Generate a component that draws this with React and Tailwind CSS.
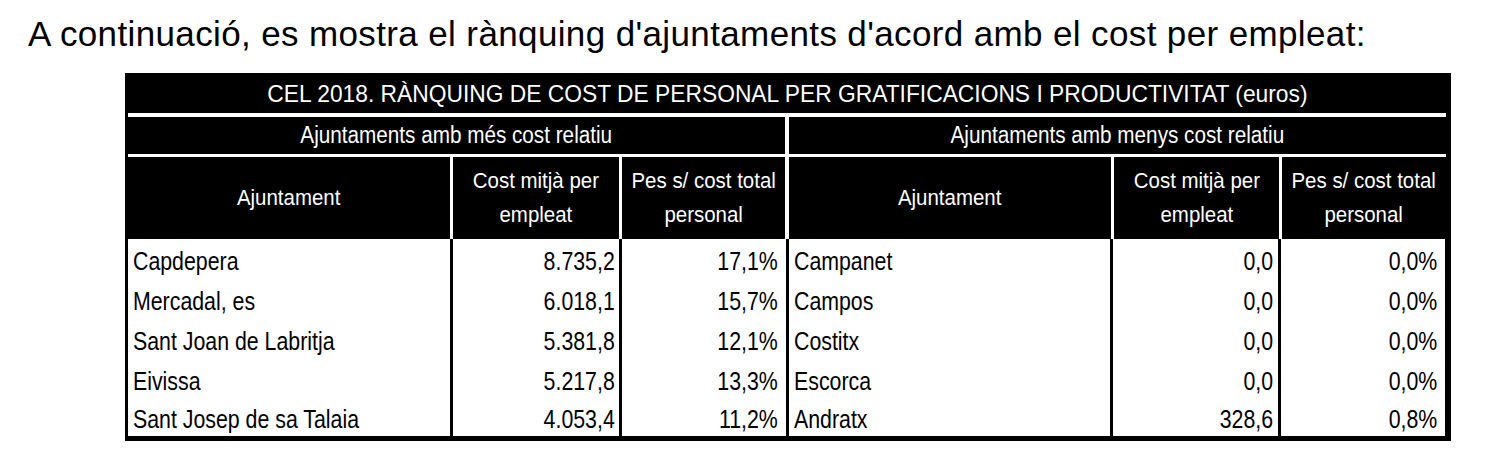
import React from "react";

const arial = "font-['Liberation_Sans',Arial,sans-serif]";

const left = [
  ["Capdepera", "8.735,2", "17,1%"],
  ["Mercadal, es", "6.018,1", "15,7%"],
  ["Sant Joan de Labritja", "5.381,8", "12,1%"],
  ["Eivissa", "5.217,8", "13,3%"],
  ["Sant Josep de sa Talaia", "4.053,4", "11,2%"],
];

const right = [
  ["Campanet", "0,0", "0,0%"],
  ["Campos", "0,0", "0,0%"],
  ["Costitx", "0,0", "0,0%"],
  ["Escorca", "0,0", "0,0%"],
  ["Andratx", "328,6", "0,8%"],
];

// the sheet uses a condensed face; squeeze Liberation Sans to match
const Narrow = ({ children, className = "" }) => (
  <span className={`inline-block whitespace-nowrap ${className}`}>{children}</span>
);

const HeadCell = ({ children }) => (
  <div className="bg-black flex items-center justify-center text-center leading-[34px]">
    <Narrow className="scale-x-[0.93] origin-center">{children}</Narrow>
  </div>
);

const Rule = () => <div className="bg-white" />;

const TextCell = ({ children, extra = "" }) => (
  <div className={`bg-white flex items-center pt-[3px] pl-[5px] ${extra}`}>
    <Narrow className="scale-x-[0.82] origin-left">{children}</Narrow>
  </div>
);

const NumCell = ({ children, extra = "" }) => (
  <div className={`bg-white flex items-center justify-end pt-[3px] ${extra}`}>
    <Narrow className="scale-x-[0.82] origin-right">{children}</Narrow>
  </div>
);

export default function App() {
  return (
    <div className={`bg-white w-[1501px] h-[461px] text-black ${arial}`}>
      <h1 className="pl-[28px] pt-[14px] h-[73px] text-[35px] leading-[40px] tracking-[0.37px] whitespace-nowrap">
        A continuació, es mostra el rànquing d'ajuntaments d'acord amb el cost per empleat:
      </h1>

      <div className="ml-[125px] w-[1326px] bg-black border-l-[3px] border-r-[5px] border-b-[5px] border-black">
        {/* title */}
        <div className="h-[40px] flex items-center justify-center text-white text-[24px] pt-[2px]">
          <Narrow className="scale-x-[0.95] origin-center">
            CEL 2018. RÀNQUING DE COST DE PERSONAL PER GRATIFICACIONS I PRODUCTIVITAT (euros)
          </Narrow>
        </div>

        {/* header block, white rules between black cells */}
        <div className="bg-white pt-[4px] text-white text-[22px]">
          <div className="grid grid-cols-[657px_657px] gap-x-[4px] h-[37px] text-[23px]">
            <div className="bg-black flex items-center justify-center">
              <Narrow className="scale-x-[0.9] origin-center">Ajuntaments amb més cost relatiu</Narrow>
            </div>
            <div className="bg-black flex items-center justify-center">
              <Narrow className="scale-x-[0.9] origin-center">Ajuntaments amb menys cost relatiu</Narrow>
            </div>
          </div>
          <div className="mt-[3px] grid grid-cols-[322px_3px_166px_3px_163px_4px_322px_3px_165px_3px_164px] h-[82px]">
            <HeadCell>Ajuntament</HeadCell>
            <Rule />
            <HeadCell>Cost mitjà per<br />empleat</HeadCell>
            <Rule />
            <HeadCell>Pes s/ cost total<br />personal</HeadCell>
            <Rule />
            <HeadCell>Ajuntament</HeadCell>
            <Rule />
            <HeadCell>Cost mitjà per<br />empleat</HeadCell>
            <Rule />
            <HeadCell>Pes s/ cost total<br />personal</HeadCell>
          </div>
        </div>

        {/* body, black rules between white cells */}
        <div className="grid grid-cols-[322px_166px_163px_322px_165px_164px] grid-rows-[40px_40px_40px_40px_37px] gap-x-[3px] text-[26px] leading-[30px]">
          {left.map((l, i) => {
            const r = right[i];
            return (
              <React.Fragment key={l[0]}>
                <TextCell>{l[0]}</TextCell>
                <NumCell extra="pr-[4px]">{l[1]}</NumCell>
                <NumCell extra="pr-[8px] -mr-[1px]">{l[2]}</NumCell>
                <TextCell extra="ml-[1px]">{r[0]}</TextCell>
                <NumCell extra="pr-[5px]">{r[1]}</NumCell>
                <NumCell extra="pr-[8px]">{r[2]}</NumCell>
              </React.Fragment>
            );
          })}
        </div>
      </div>
    </div>
  );
}
